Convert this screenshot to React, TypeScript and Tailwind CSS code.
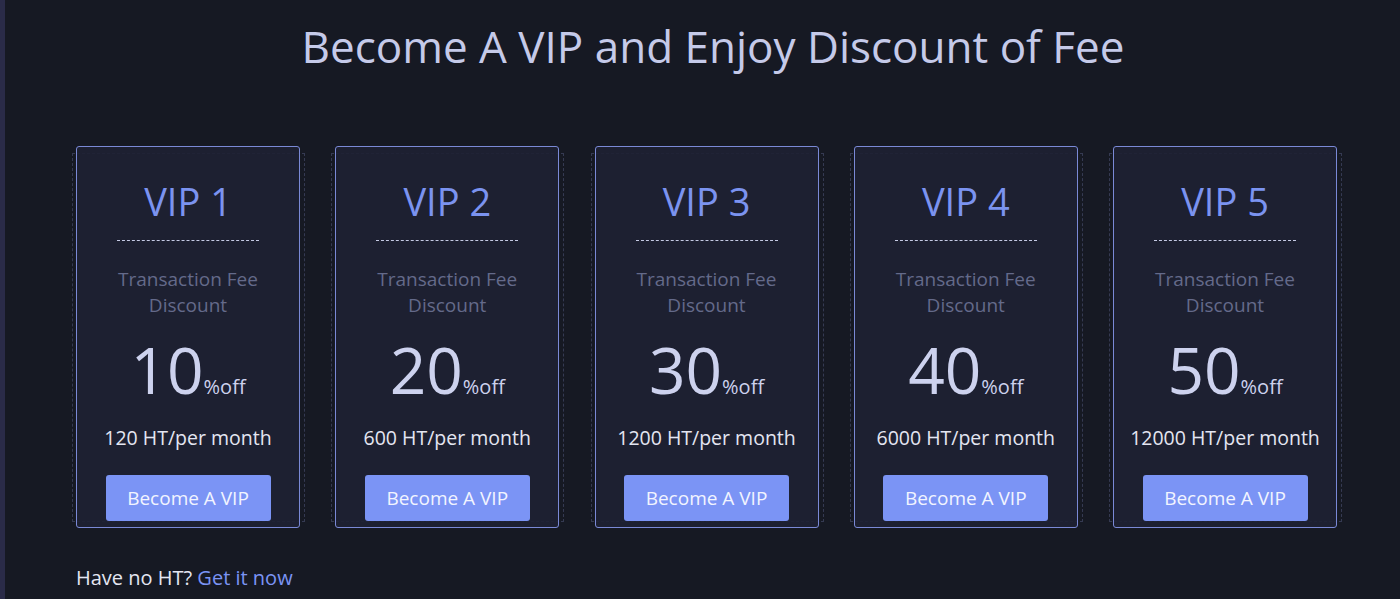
import React from 'react';

const tiers = [
  { level: 1, off: 10, price: 120 },
  { level: 2, off: 20, price: 600 },
  { level: 3, off: 30, price: 1200 },
  { level: 4, off: 40, price: 6000 },
  { level: 5, off: 50, price: 12000 },
];

const VipCard: React.FC<{ level: number; off: number; price: number }> = ({ level, off, price }) => (
  <div className="relative w-[224px] h-[382px] shrink-0">
    {/* faint dashed frame behind the card */}
    <div className="absolute -left-[4px] -right-[5px] top-[7px] bottom-[6px] border border-dashed border-[#353a52]" />
    <div className="relative h-full rounded-[3px] border border-[#7a89d6] bg-[#1e2133]/90 flex flex-col items-center">
      <div className="mt-[30px] text-[38px] leading-[48px] text-[#7b93f0]">VIP {level}</div>
      <div className="mt-[15px] w-[142px] border-t border-dashed border-[#c5cae4]" />
      <div className="mt-[25px] text-[19px] leading-[26px] text-[#646a8a] text-center">
        Transaction Fee
        <br />
        Discount
      </div>
      <div className="mt-[20px] flex items-baseline text-[#cdd2ee]">
        <span className="text-[64px] leading-none">{off}</span>
        <span className="text-[20px] leading-none">%off</span>
      </div>
      <div className="mt-[23px] text-[19.5px] leading-[26px] text-[#e4e6f2]">{price} HT/per month</div>
      <button className="mt-[24px] w-[165px] h-[46px] rounded-[3px] bg-[#7b94f5] text-[19px] text-[#f2f4ff]">
        Become A VIP
      </button>
    </div>
  </div>
);

export default function App() {
  return (
    <div
      className="flex h-[599px] w-full bg-[#161923] overflow-hidden"
      style={{ fontFamily: '"Open Sans", "Noto Sans", sans-serif' }}
    >
      <div className="w-[5px] shrink-0 bg-[#2a2b48]" />
      <main className="flex-1 flex flex-col pl-[71px]">
        <h1 className="mt-[21px] pr-[50px] text-center text-[44px] leading-[50px] text-[#c5cae9]">
          Become A VIP and Enjoy Discount of Fee
        </h1>
        <div className="mt-[75px] flex gap-[35.25px]">
          {tiers.map((t) => (
            <VipCard key={t.level} {...t} />
          ))}
        </div>
        <p className="mt-[37px] text-[20px] leading-[26px] text-[#e4e6f2]">
          Have no HT? <span className="text-[#7b94f5]">Get it now</span>
        </p>
      </main>
    </div>
  );
}
